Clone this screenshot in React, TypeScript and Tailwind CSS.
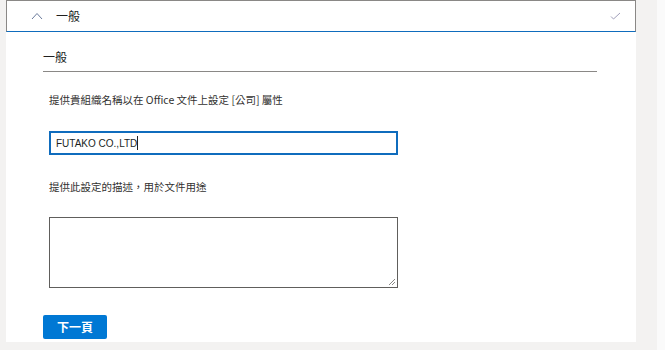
const cjk = "font-['Segoe_UI','Noto_Sans_CJK_TC','Noto_Sans',sans-serif]";

export default function App() {
  return (
    <div className={`w-[665px] h-[350px] bg-[#f3f2f1] flex ${cjk}`}>
      <div className="ml-[6px] w-[630px] h-[342px] bg-white flex flex-col">
        {/* accordion header */}
        <div className="h-[32px] border border-[#8a8886] border-b-[#0f6cbd] flex items-center shrink-0">
          <svg className="ml-[24px]" width="12" height="8" viewBox="0 0 12 8" fill="none">
            <path d="M1 7 L6 1.5 L11 7" stroke="#6b7b9c" strokeWidth="1" />
          </svg>
          <span className="ml-[13px] text-[12px] leading-4 text-[#201f1e]">一般</span>
          <svg className="ml-auto mr-[14px]" width="11" height="8" viewBox="0 0 11 8" fill="none">
            <path d="M1 4.5 L3.5 7 L10 1" stroke="#a19fba" strokeWidth="1" />
          </svg>
        </div>

        <div className="pl-[37px] flex flex-col">
          <div className="mt-[17px] w-[554px] pb-[6px] border-b border-[#8a8886] text-[12px] leading-4 text-[#201f1e]">
            一般
          </div>

          <div className="pl-[6px] flex flex-col">
            <div className="mt-[20px] text-[10.5px] leading-4 text-[#323130]">
              提供貴組織名稱以在 Office 文件上設定 [公司] 屬性
            </div>
            <div className="mt-[23px] w-[349px] h-[24px] border-2 border-[#0f6cbd] flex items-center px-[5px]">
              <span className="text-[10px] text-[#201f1e] font-['Liberation_Sans',sans-serif]">FUTAKO CO.,LTD</span>
              <span className="w-px h-[14px] bg-[#201f1e]" />
            </div>

            <div className="mt-[24px] text-[10.5px] leading-4 text-[#323130]">
              提供此設定的描述，用於文件用途
            </div>
            <div className="mt-[22px] w-[349px] h-[71px] border border-[#605e5c] relative">
              <svg className="absolute right-[1px] bottom-[1px]" width="8" height="8" viewBox="0 0 8 8">
                <path d="M7 1 L1 7 M7 4 L4 7" stroke="#8a8886" strokeWidth="1" />
              </svg>
            </div>
          </div>

          <button className="mt-[27px] w-[64px] h-[24px] rounded-[2px] bg-[#0078d4] text-white text-[12px] font-semibold flex items-center justify-center">
            下一頁
          </button>
        </div>
      </div>
      <div className="w-[21px] h-[342px] bg-[#f3f2f1]" />
      <div className="flex-1 h-full bg-[#fafafa]" />
    </div>
  );
}
